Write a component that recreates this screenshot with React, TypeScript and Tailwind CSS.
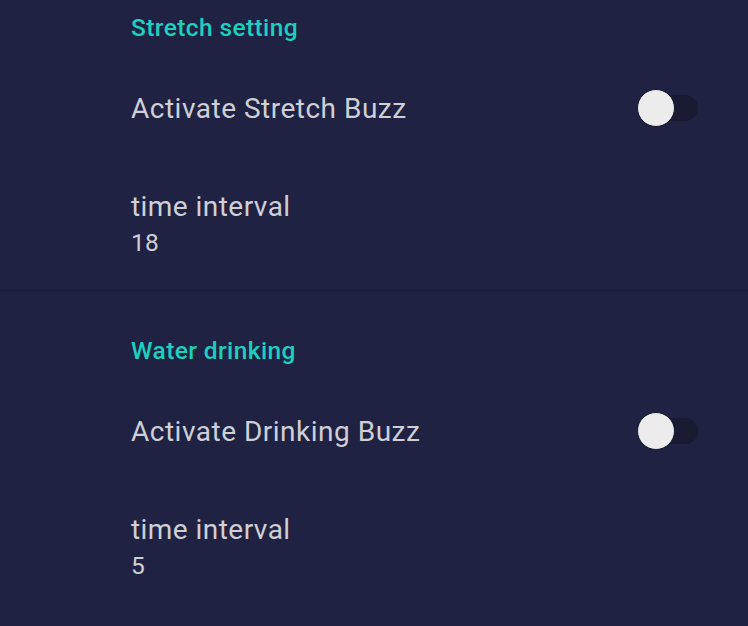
const font = { fontFamily: 'Roboto, "Noto Sans", sans-serif' };

function Toggle() {
  return (
    <div className="relative w-[62px] h-[38px] flex items-center">
      <div className="ml-[12px] w-[49px] h-[26px] rounded-full bg-[#191b33]" />
      <div className="absolute left-0 top-0 w-[38px] h-[38px] rounded-full bg-[#ececec] border border-[#14162c]" />
    </div>
  );
}

interface SectionProps {
  title: string;
  label: string;
  value: string;
  first?: boolean;
}

function Section({ title, label, value, first }: SectionProps) {
  return (
    <div className={first ? 'pl-[131px] pt-[12px] pb-[29px]' : 'pl-[131px] pt-[44px] pb-[43px]'}>
      <div className="text-[24.5px] leading-[32px] font-medium tracking-[0.4px] text-[#1ccfbf]">{title}</div>
      <div className="h-[128px] flex items-center justify-between pr-[49px]">
        <span className="pt-[2px] text-[28px] tracking-[0.5px] text-[#cfcfd6]">{label}</span>
        <Toggle />
      </div>
      <div className="pt-[17px]">
        <div className="text-[28px] leading-[36px] tracking-[0.45px] text-[#cfcfd6]">time interval</div>
        <div className="text-[24.5px] leading-[36px] tracking-[0.3px] text-[#cfcfd6]">{value}</div>
      </div>
    </div>
  );
}

export default function App() {
  return (
    <div className="w-[748px] h-[626px] overflow-hidden bg-[#1f2242]" style={font}>
      <Section first title="Stretch setting" label="Activate Stretch Buzz" value="18" />
      <div className="h-px bg-[#1b1d38]" />
      <Section title="Water drinking" label="Activate Drinking Buzz" value="5" />
    </div>
  );
}
